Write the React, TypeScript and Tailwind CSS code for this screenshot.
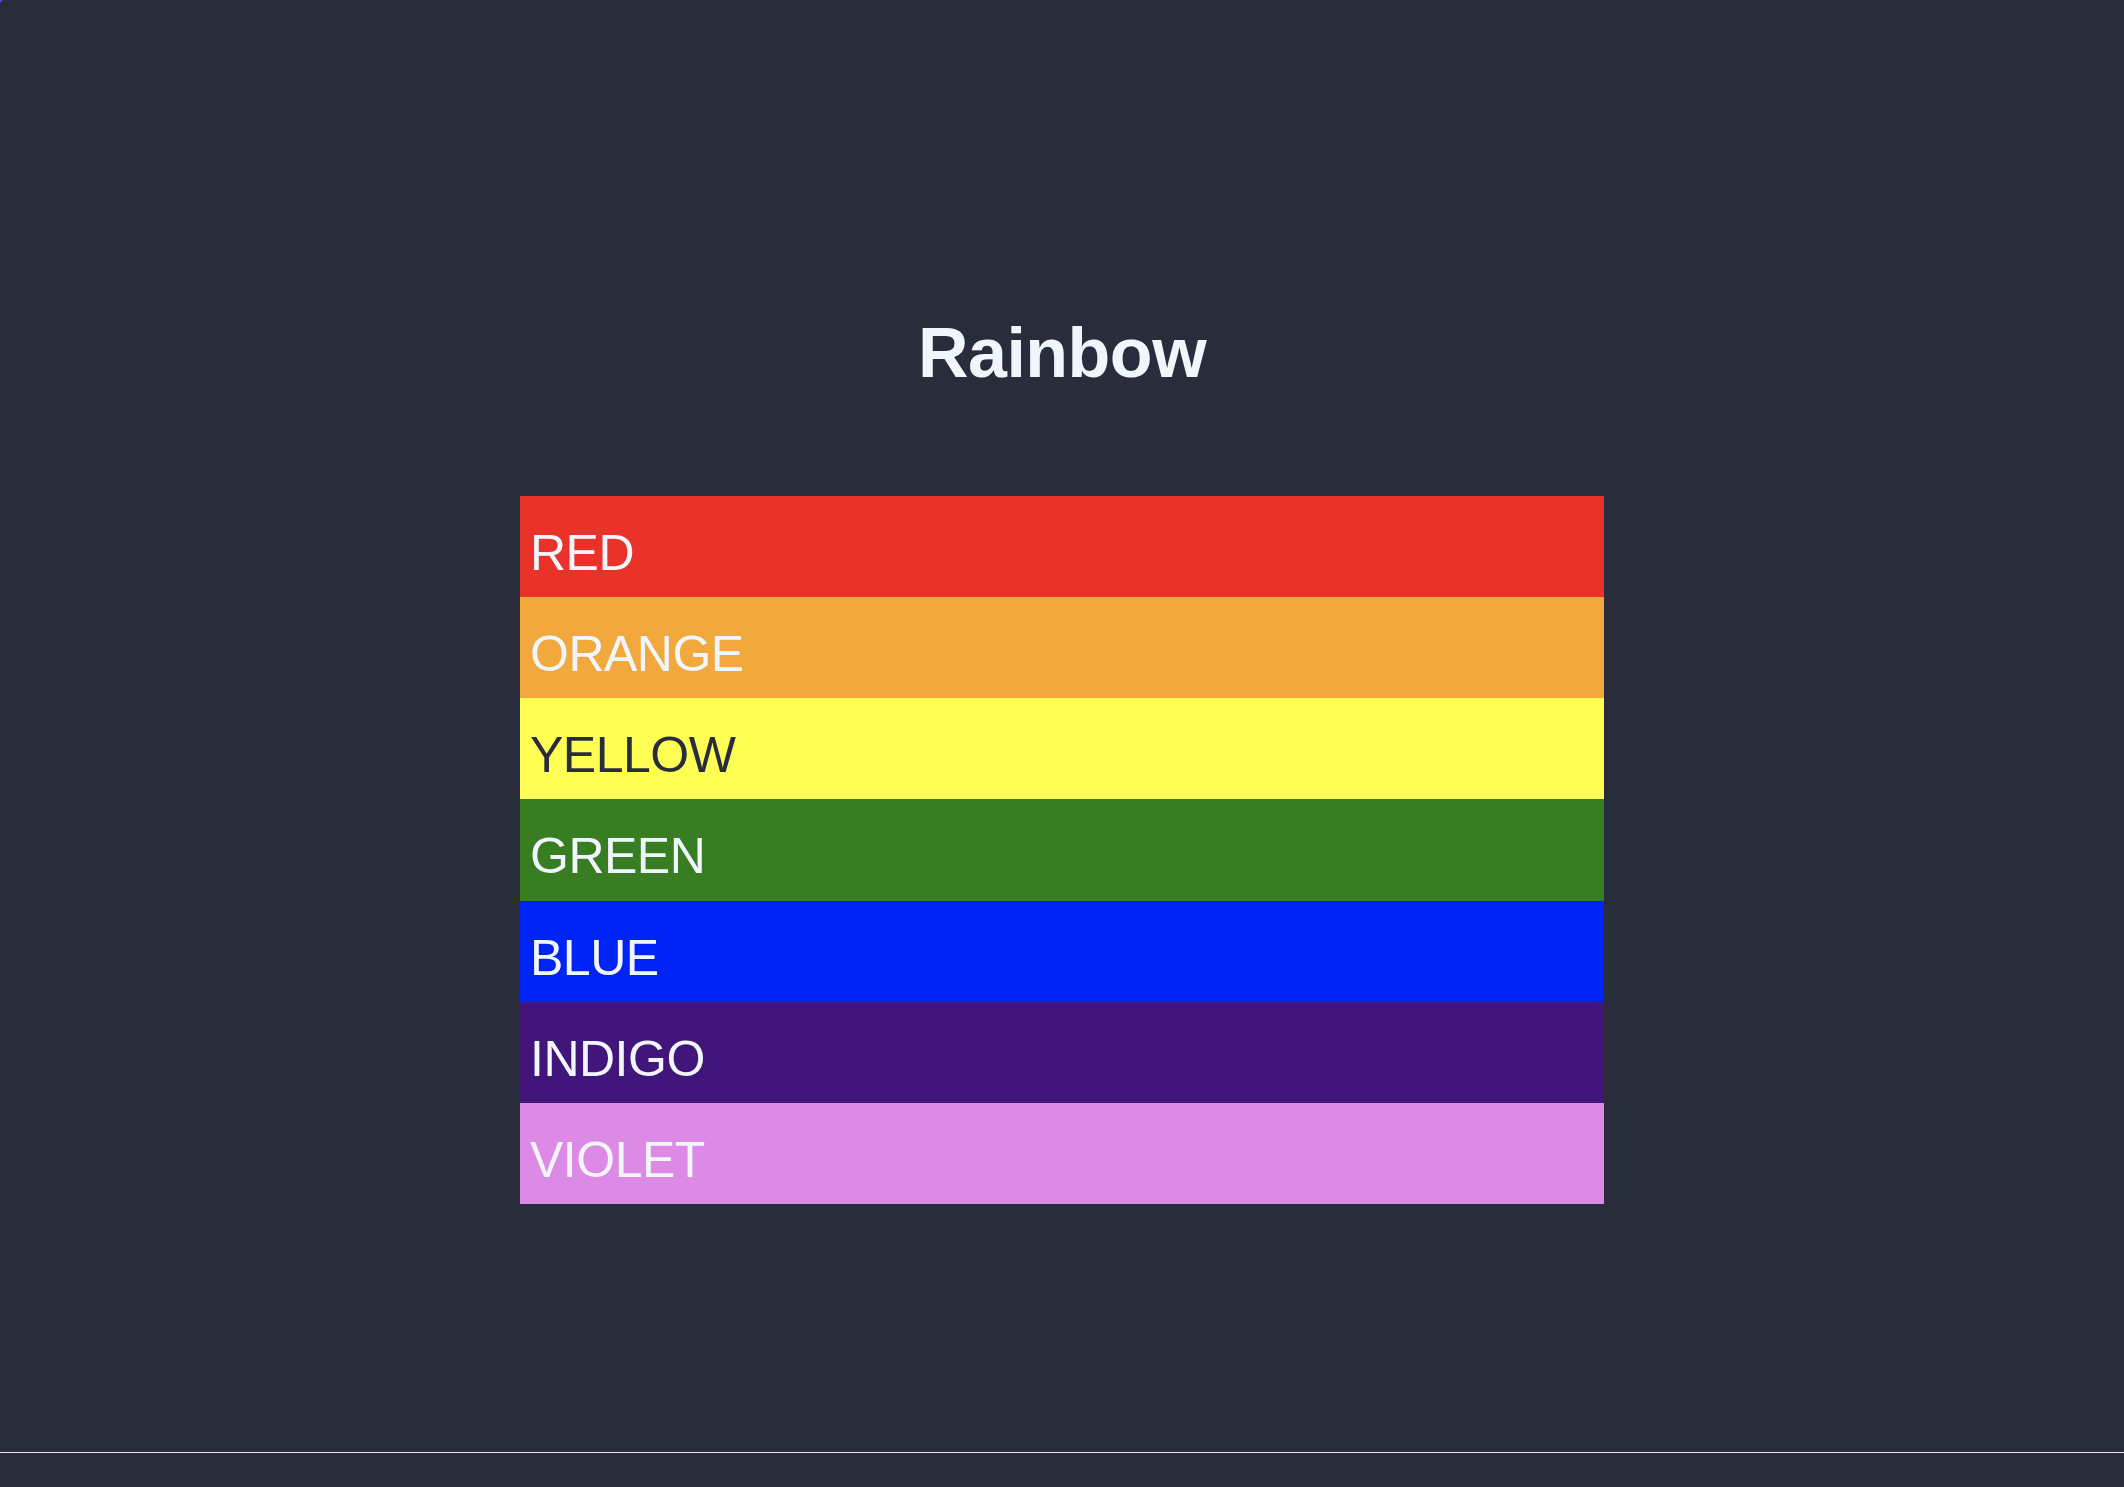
import React from "react";

const stripes = [
  { name: "RED", bg: "bg-[#e9332a]", fg: "text-[#f0f6fc]" },
  { name: "ORANGE", bg: "bg-[#f1a83d]", fg: "text-[#f0f6fc]" },
  { name: "YELLOW", bg: "bg-[#fffe55]", fg: "text-[#292c3b]" },
  { name: "GREEN", bg: "bg-[#397d23]", fg: "text-[#f0f6fc]" },
  { name: "BLUE", bg: "bg-[#0023f6]", fg: "text-[#f0f6fc]" },
  { name: "INDIGO", bg: "bg-[#42157a]", fg: "text-[#f0f6fc]" },
  { name: "VIOLET", bg: "bg-[#dd89e6]", fg: "text-[#f0f6fc]" },
];

export default function App() {
  return (
    <div
      className="relative w-full h-[1487px] bg-[#292c3b] flex flex-col"
      style={{ fontFamily: '"Liberation Sans", Arial, sans-serif' }}
    >
      <div className="absolute left-0 top-0 w-[2px] h-[2px] bg-[#3a4cff]" />
      <div className="h-[1452px] flex flex-col items-center pt-[318px]">
        <h1 className="text-[70px] leading-[70px] font-bold tracking-[-0.5px] text-[#f0f6fc]">
          Rainbow
        </h1>
        <div className="mt-[108px] w-[1084px] flex flex-col">
          {stripes.map((s) => (
            <div
              key={s.name}
              className={`${s.bg} ${s.fg} h-[101.15px] pl-[10px] pt-[32px] text-[50px] leading-[50px] tracking-[-0.5px]`}
            >
              {s.name}
            </div>
          ))}
        </div>
      </div>
      <div className="h-px w-full bg-[#e6e8ee]" />
    </div>
  );
}
